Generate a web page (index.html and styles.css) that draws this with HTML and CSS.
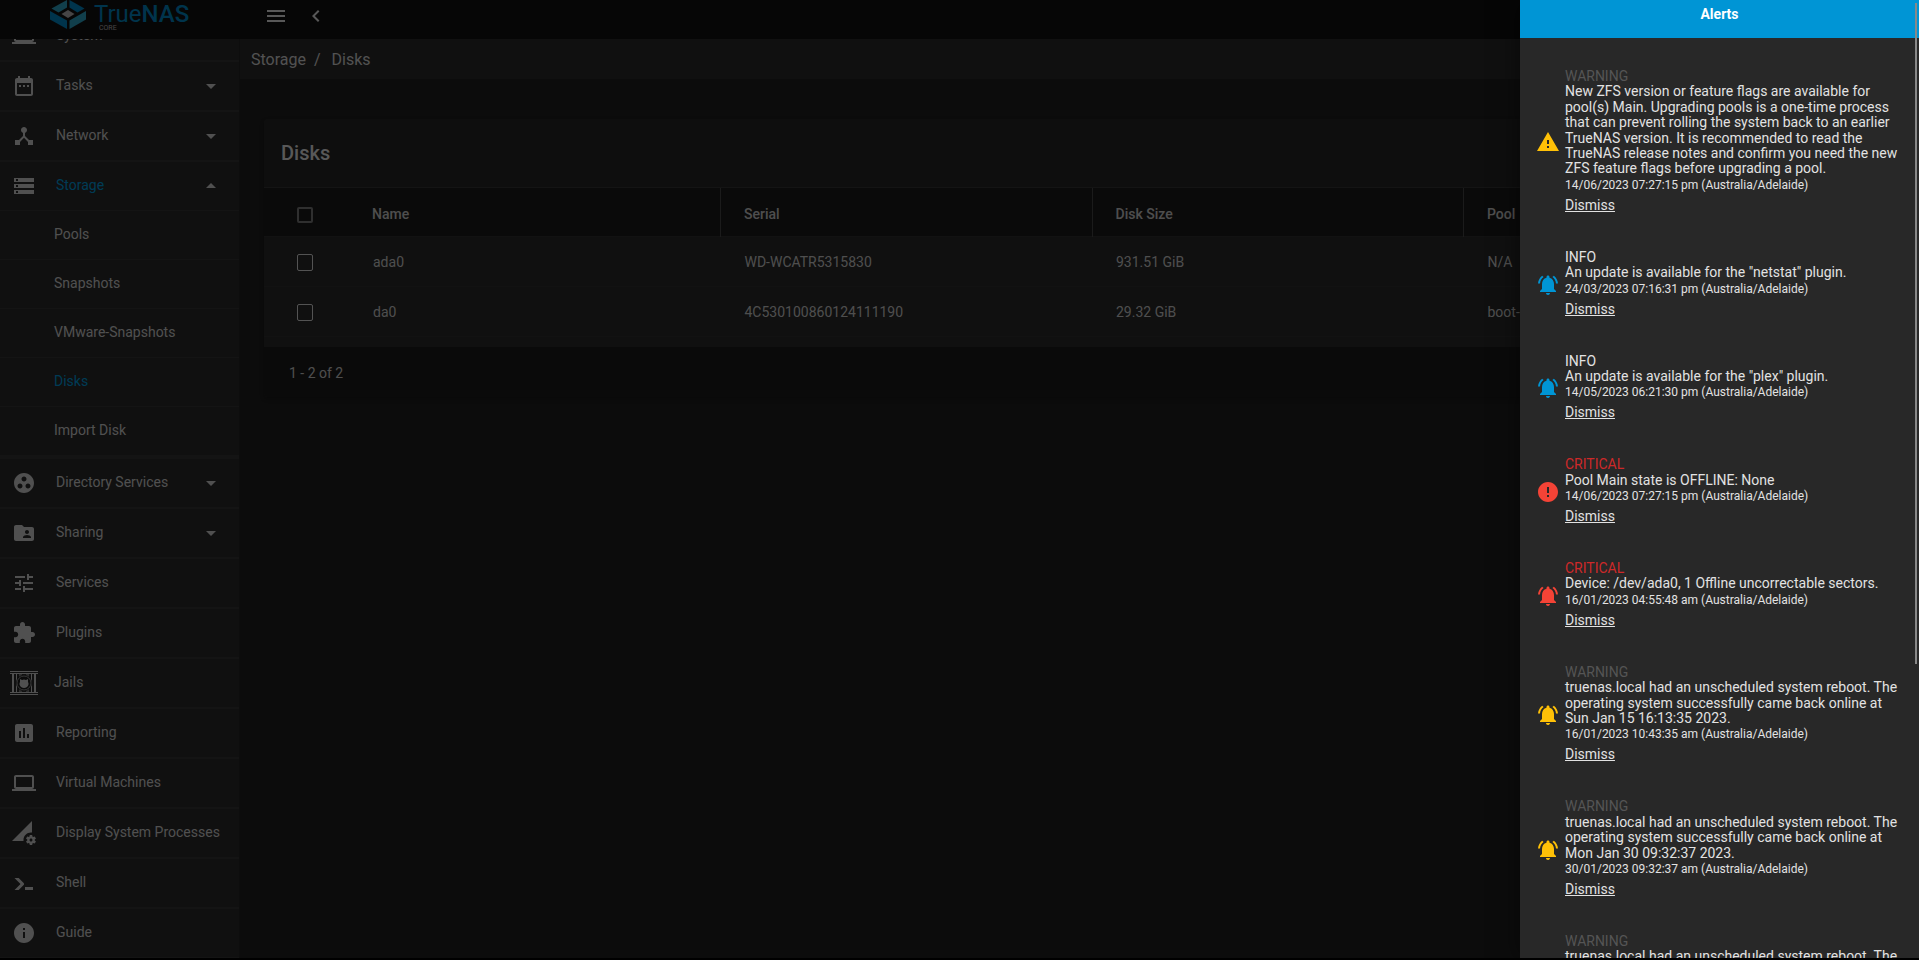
FILE: index.html
```html
<!DOCTYPE html>
<html lang="en">
<head>
<meta charset="utf-8">
<title>TrueNAS - Disks</title>
<link rel="stylesheet" href="styles.css">
</head>
<body>
<div class="app">
  <header class="topbar">
    <a class="logo" href="#" aria-label="TrueNAS Core">
      <svg class="logo-mark" viewBox="0 0 36 29" aria-hidden="true">
        <path fill="#2b9ebf" d="M17 0v7.500L8.500 12.500 1.500 8.500z"/>
        <path fill="#0082bd" d="M19.500 0l15 8.500-7 4-8-5z"/>
        <path fill="#0082bd" d="M0 11l17 9.500V29L0 19.500z"/>
        <path fill="#2b9ebf" d="M36 11l-16.500 9.500V29L36 19.500z"/>
        <path fill="#aeadae" d="M18 10l6.500 4-6.500 4-6.500-4z"/>
      </svg>
      <span class="logo-text"><span class="logo-name">True<b>NAS</b></span><span class="logo-sub">CORE</span></span>
    </a>
    <button class="icon-btn" aria-label="Toggle menu"><svg viewBox="0 0 24 24"><path d="M3 18h18v-2H3v2zm0-5h18v-2H3v2zm0-7v2h18V6H3z"/></svg></button>
    <button class="icon-btn" aria-label="Collapse menu"><svg viewBox="0 0 24 24"><path d="M15.410 7.410L14 6l-6 6 6 6 1.410-1.410L10.830 12z"/></svg></button>
  </header>
  <div class="shell">
    <nav class="sidebar" aria-label="Main">
      <ul class="menu">
        <li><a class="item" href="#"><svg viewBox="0 0 24 24"><path d="M20 18c1.100 0 1.990-.9 1.990-2L22 6c0-1.100-.9-2-2-2H4c-1.100 0-2 .9-2 2v10c0 1.100.9 2 2 2H0v2h24v-2h-4zM4 6h16v10H4V6z"/></svg><span>System</span></a></li>
        <li><a class="item" href="#"><svg viewBox="0 0 24 24"><path d="M9 11H7v2h2v-2zm4 0h-2v2h2v-2zm4 0h-2v2h2v-2zm2-7h-1V2h-2v2H8V2H6v2H5c-1.110 0-1.990.9-1.990 2L3 20c0 1.100.89 2 2 2h14c1.100 0 2-.9 2-2V6c0-1.100-.9-2-2-2zm0 16H5V9h14v11z"/></svg><span>Tasks</span><svg class="caret" viewBox="0 0 24 24"><path d="M7 10l5 5 5-5z"/></svg></a></li>
        <li><a class="item" href="#"><svg viewBox="0 0 24 24"><path d="M17 16l-4-4V8.820C14.160 8.400 15 7.300 15 6c0-1.660-1.340-3-3-3S9 4.340 9 6c0 1.300.84 2.400 2 2.820V12l-4 4H3v5h5v-3.050l4-4.200 4 4.200V21h5v-5h-4z"/></svg><span>Network</span><svg class="caret" viewBox="0 0 24 24"><path d="M7 10l5 5 5-5z"/></svg></a></li>
        <li class="open"><a class="item active" href="#"><svg viewBox="0 0 24 24"><path d="M2 20h20v-4H2v4zm2-3h2v2H4v-2zM2 4v4h20V4H2zm4 3H4V5h2v2zm-4 7h20v-4H2v4zm2-3h2v2H4v-2z"/></svg><span>Storage</span><svg class="caret" viewBox="0 0 24 24"><path d="M7 14l5-5 5 5z"/></svg></a>
          <ul class="submenu">
            <li><a href="#">Pools</a></li>
            <li><a href="#">Snapshots</a></li>
            <li><a href="#">VMware-Snapshots</a></li>
            <li><a class="active" href="#">Disks</a></li>
            <li><a href="#">Import Disk</a></li>
          </ul></li>
        <li><a class="item" href="#"><svg viewBox="0 0 24 24"><path d="M12 2C6.480 2 2 6.480 2 12s4.480 10 10 10 10-4.480 10-10S17.520 2 12 2zM8 17.500c-1.380 0-2.500-1.120-2.500-2.500s1.120-2.500 2.500-2.500 2.500 1.120 2.500 2.500-1.120 2.500-2.500 2.500zM9.500 8c0-1.380 1.120-2.500 2.500-2.500s2.500 1.120 2.500 2.500-1.120 2.500-2.500 2.500S9.500 9.380 9.500 8zm6.500 9.500c-1.380 0-2.500-1.120-2.500-2.500s1.120-2.500 2.500-2.500 2.500 1.120 2.500 2.500-1.120 2.500-2.500 2.500z"/></svg><span>Directory Services</span><svg class="caret" viewBox="0 0 24 24"><path d="M7 10l5 5 5-5z"/></svg></a></li>
        <li><a class="item" href="#"><svg viewBox="0 0 24 24"><path d="M20 6h-8l-2-2H4c-1.100 0-1.990.9-1.990 2L2 18c0 1.100.9 2 2 2h16c1.100 0 2-.9 2-2V8c0-1.100-.9-2-2-2zm-5 3c1.100 0 2 .9 2 2s-.9 2-2 2-2-.9-2-2 .9-2 2-2zm4 8h-8v-1c0-1.330 2.670-2 4-2s4 .67 4 2v1z"/></svg><span>Sharing</span><svg class="caret" viewBox="0 0 24 24"><path d="M7 10l5 5 5-5z"/></svg></a></li>
        <li><a class="item" href="#"><svg viewBox="0 0 24 24"><path d="M3 17v2h6v-2H3zM3 5v2h10V5H3zm10 16v-2h8v-2h-8v-2h-2v6h2zM7 9v2H3v2h4v2h2V9H7zm14 4v-2H11v2h10zm-6-4h2V7h4V5h-4V3h-2v6z"/></svg><span>Services</span></a></li>
        <li><a class="item" href="#"><svg viewBox="0 0 24 24"><path d="M20.500 11H19V7c0-1.100-.9-2-2-2h-4V3.500C13 2.120 11.880 1 10.500 1S8 2.120 8 3.500V5H4c-1.100 0-1.990.9-1.990 2v3.800H3.500c1.490 0 2.700 1.210 2.700 2.700s-1.210 2.700-2.700 2.700H2V20c0 1.100.9 2 2 2h3.800v-1.500c0-1.490 1.210-2.700 2.700-2.700 1.490 0 2.700 1.210 2.700 2.700V22H17c1.100 0 2-.9 2-2v-4h1.500c1.380 0 2.500-1.120 2.500-2.500S21.880 11 20.500 11z"/></svg><span>Plugins</span></a></li>
        <li><a class="item jails" href="#"><svg viewBox="0 0 28 24"><path d="M0 0h28v1H0zM0 2h28v1H0zM0 21h28v1H0zM0 23h28v1H0zM2 3h2v18H2zM6 3h1v18H6zM21 3h1v18h-1zM24 3h2v18h-2z"/><path class="jail-dim" d="M9 3h3v18H9zM16 3h3v18h-3z"/><circle class="jail-gap" cx="14" cy="12" r="8"/><circle class="jail-ring" cx="14" cy="12" r="7"/><path d="M10 8l2 1q2-1 4 0l2-1v3q1.500 2.500-1 5-3 2-6 0-2.500-2.500-1-5z"/></svg><span>Jails</span></a></li>
        <li><a class="item" href="#"><svg viewBox="0 0 24 24"><path d="M19 3H5c-1.100 0-2 .9-2 2v14c0 1.100.9 2 2 2h14c1.100 0 2-.9 2-2V5c0-1.100-.9-2-2-2zM9 17H7v-7h2v7zm4 0h-2V7h2v10zm4 0h-2v-4h2v4z"/></svg><span>Reporting</span></a></li>
        <li><a class="item" href="#"><svg viewBox="0 0 24 24"><path d="M20 18c1.100 0 1.990-.9 1.990-2L22 6c0-1.100-.9-2-2-2H4c-1.100 0-2 .9-2 2v10c0 1.100.9 2 2 2H0v2h24v-2h-4zM4 6h16v10H4V6z"/></svg><span>Virtual Machines</span></a></li>
        <li><a class="item" href="#"><svg viewBox="0 0 24 24"><path d="M18.990 11.500c.34 0 .67.030 1 .070L20 0 0 20h11.560c-.040-.33-.070-.66-.070-1 0-4.140 3.360-7.500 7.500-7.500zm3.710 7.990c.020-.16.040-.32.040-.49 0-.17-.010-.33-.040-.49l1.060-.83c.090-.080.120-.21.060-.32l-1-1.730c-.060-.11-.19-.15-.31-.11l-1.240.5c-.26-.2-.54-.37-.85-.49l-.19-1.320c-.010-.12-.12-.21-.24-.21h-2c-.12 0-.23.090-.25.210l-.19 1.320c-.3.130-.59.290-.85.490l-1.240-.5c-.11-.040-.24 0-.31.110l-1 1.730c-.060.110-.040.240.060.320l1.060.83c-.020.160-.030.320-.030.490 0 .17.010.33.030.49l-1.060.83c-.090.080-.12.210-.060.320l1 1.730c.060.110.19.150.31.110l1.240-.5c.26.2.54.37.85.49l.19 1.320c.020.120.12.210.25.210h2c.12 0 .23-.090.240-.21l.19-1.320c.3-.13.590-.29.840-.49l1.250.5c.11.040.24 0 .31-.11l1-1.730c.060-.11.030-.24-.060-.32l-1.070-.83zm-3.710 1.010c-.83 0-1.500-.67-1.500-1.500s.67-1.500 1.500-1.500 1.500.67 1.500 1.500-.67 1.500-1.500 1.500z"/></svg><span>Display System Processes</span></a></li>
        <li><a class="item" href="#"><svg viewBox="0 0 24 24"><path d="M13 19v-3h8v3h-8zM8.500 13L2.470 7H6.710l4.960 4.950c.58.59.58 1.550 0 2.130L6.730 19H2.500l6-6z"/></svg><span>Shell</span></a></li>
        <li><a class="item" href="#"><svg viewBox="0 0 24 24"><path d="M12 2C6.480 2 2 6.480 2 12s4.480 10 10 10 10-4.480 10-10S17.520 2 12 2zm1 15h-2v-6h2v6zm0-8h-2V7h2v2z"/></svg><span>Guide</span></a></li>
      </ul>
    </nav>
    <main class="content">
      <nav class="crumbs" aria-label="Breadcrumb"><a href="#">Storage</a><span class="sep">/</span><a href="#">Disks</a></nav>
      <section class="card">
        <h1>Disks</h1>
        <table>
          <colgroup><col class="col-check"><col><col><col><col><col class="col-expand"></colgroup>
          <thead><tr><th><input type="checkbox" aria-label="Select all disks"></th><th>Name</th><th>Serial</th><th>Disk Size</th><th>Pool</th><th></th></tr></thead>
          <tbody>
            <tr><td><input type="checkbox" aria-label="Select ada0"></td><td>ada0</td><td>WD-WCATR5315830</td><td>931.51 GiB</td><td>N/A</td><td></td></tr>
            <tr><td><input type="checkbox" aria-label="Select da0"></td><td>da0</td><td>4C530100860124111190</td><td>29.32 GiB</td><td>boot-pool</td><td></td></tr>
          </tbody>
        </table>
        <footer class="pager">1 - 2 of 2</footer>
      </section>
    </main>
  </div>
  <div class="backdrop"></div>
  <aside class="drawer" aria-label="Alerts">
    <h2>Alerts</h2>
    <svg class="defs" aria-hidden="true">
      <symbol id="bell" viewBox="0 0 24 24"><path d="M7.580 4.080L6.150 2.650C3.750 4.480 2.170 7.300 2.030 10.500h2c.15-2.650 1.510-4.970 3.550-6.420zm12.390 6.420h2c-.15-3.200-1.730-6.020-4.120-7.850l-1.420 1.430c2.020 1.450 3.390 3.770 3.540 6.420zM18 11c0-3.070-1.640-5.640-4.500-6.320V4c0-.83-.67-1.500-1.500-1.500s-1.500.67-1.500 1.500v.68C7.630 5.360 6 7.920 6 11v5l-2 2v1h16v-1l-2-2v-5zm-6 11c.14 0 .27-.010.4-.040.650-.14 1.180-.58 1.440-1.180.1-.24.150-.5.150-.78h-4c.010 1.100.9 2 2.010 2z"/></symbol>
      <symbol id="warn" viewBox="0 0 24 24"><path d="M1 21h22L12 2 1 21zm12-3h-2v-2h2v2zm0-4h-2v-4h2v4z"/></symbol>
      <symbol id="error" viewBox="0 0 24 24"><path d="M12 2C6.480 2 2 6.480 2 12s4.480 10 10 10 10-4.480 10-10S17.520 2 12 2zm1 15h-2v-2h2v2zm0-4h-2V7h2v6z"/></symbol>
    </svg>
    <ul class="alerts">
      <li class="alert warning"><svg><use href="#warn"/></svg><div><h3>WARNING</h3><p>New ZFS version or feature flags are available for pool(s) Main. Upgrading pools is a one-time process that can prevent rolling the system back to an earlier TrueNAS version. It is recommended to read the TrueNAS release notes and confirm you need the new ZFS feature flags before upgrading a pool.</p><time>14/06/2023 07:27:15 pm (Australia/Adelaide)</time><a href="#">Dismiss</a></div></li>
      <li class="alert info"><svg><use href="#bell"/></svg><div><h3>INFO</h3><p>An update is available for the "netstat" plugin.</p><time>24/03/2023 07:16:31 pm (Australia/Adelaide)</time><a href="#">Dismiss</a></div></li>
      <li class="alert info"><svg><use href="#bell"/></svg><div><h3>INFO</h3><p>An update is available for the "plex" plugin.</p><time>14/05/2023 06:21:30 pm (Australia/Adelaide)</time><a href="#">Dismiss</a></div></li>
      <li class="alert critical"><svg><use href="#error"/></svg><div><h3>CRITICAL</h3><p>Pool Main state is OFFLINE: None</p><time>14/06/2023 07:27:15 pm (Australia/Adelaide)</time><a href="#">Dismiss</a></div></li>
      <li class="alert critical"><svg><use href="#bell"/></svg><div><h3>CRITICAL</h3><p>Device: /dev/ada0, 1 Offline uncorrectable sectors.</p><time>16/01/2023 04:55:48 am (Australia/Adelaide)</time><a href="#">Dismiss</a></div></li>
      <li class="alert warning"><svg><use href="#bell"/></svg><div><h3>WARNING</h3><p>truenas.local had an unscheduled system reboot. The operating system successfully came back online at Sun Jan 15 16:13:35 2023.</p><time>16/01/2023 10:43:35 am (Australia/Adelaide)</time><a href="#">Dismiss</a></div></li>
      <li class="alert warning"><svg><use href="#bell"/></svg><div><h3>WARNING</h3><p>truenas.local had an unscheduled system reboot. The operating system successfully came back online at Mon Jan 30 09:32:37 2023.</p><time>30/01/2023 09:32:37 am (Australia/Adelaide)</time><a href="#">Dismiss</a></div></li>
      <li class="alert warning last"><div><h3>WARNING</h3><p>truenas.local had an unscheduled system reboot. The</p></div></li>
    </ul>
    <div class="scroll-thumb"></div>
  </aside>
</div>
</body>
</html>
```
FILE: styles.css
```css
* { box-sizing: border-box; }

body {
  margin: 0;
  background: #000;
  color: #fff;
  font: 14px/20px Roboto, sans-serif;
}

a { color: inherit; text-decoration: none; }
ul { list-style: none; margin: 0; padding: 0; }
h1, h2, h3, p { margin: 0; }
svg { display: block; fill: currentColor; flex: none; }

.app {
  position: relative;
  display: flex;
  flex-direction: column;
  height: calc(100vh - 2px);
  overflow: hidden;
  background: #1e1e1e;
}

/* Top bar */
.topbar {
  display: flex;
  align-items: flex-start;
  flex: none;
  height: 39px;
  background: #111;
  color: #ddd;
}
.logo {
  display: flex;
  gap: 8px;
  width: 264px;
  padding-left: 50px;
}
.logo-mark { width: 36px; height: 29px; }
.logo-text { display: flex; flex-direction: column; color: #0082bd; }
.logo-name { font-size: 24px; line-height: 28px; }
.logo-name b { font-weight: 500; }
.logo-sub { margin-top: -4px; padding-left: 5px; font-size: 7px; line-height: 8px; color: #aeadae; }
.icon-btn {
  width: 24px;
  height: 32px;
  margin-right: 16px;
  padding: 4px 0;
  border: 0;
  background: none;
  color: inherit;
}
.icon-btn svg { width: 24px; height: 24px; }

/* Sidebar */
.shell { display: flex; flex: 1; min-height: 0; }
.sidebar {
  flex: none;
  width: 240px;
  overflow: hidden;
  background: #282828;
  border-right: 1px solid #222;
}
.menu { margin-top: -27px; }
.menu > li { border-bottom: 2px solid #323232; }
.menu > li.open { border-bottom-width: 4px; }
.item {
  display: flex;
  align-items: center;
  gap: 20px;
  height: 48px;
  padding: 0 16px 0 12px;
  color: #c8c8c8;
  white-space: nowrap;
}
.item svg { width: 24px; height: 24px; }
.item span { flex: 1; margin-bottom: 2px; }
.item.active span, .submenu .active { color: #0095d5; }
.item.jails { padding-left: 10px; gap: 16px; }
.item.jails svg { width: 28px; }
.jail-dim { fill: #777; }
.jail-gap { fill: #1c1c1c; }
.jail-ring { fill: none; stroke: #888; stroke-width: 1; }
.submenu a {
  display: flex;
  align-items: center;
  height: 49px;
  padding: 0 0 2px 54px;
  border-top: 1px solid #323232;
  color: #c8c8c8;
}

/* Content */
.content { flex: 1; min-width: 0; }
.crumbs {
  display: flex;
  align-items: center;
  height: 40px;
  padding: 2px 0 0 11px;
  background: #282828;
  color: #ccc;
  font-size: 16px;
}
.sep { padding: 0 11px 0 8px; }
.card {
  margin: 40px 24px 0;
  border-radius: 4px;
  overflow: hidden;
  background: #282828;
  box-shadow: 0 2px 4px #0004;
}
.card h1 {
  padding: 22px 17px;
  background: #242424;
  color: #ddd;
  font-size: 20px;
  line-height: 24px;
  font-weight: 500;
}
table { width: 100%; table-layout: fixed; border-collapse: collapse; color: #c4c4c4; }
.col-check { width: 85px; }
.col-expand { width: 60px; }
th { height: 49px; padding: 4px 23px 0; background: #1b1b1b; border-top: 1px solid #323232; font-weight: 500; text-align: left; }
th + th + th { border-left: 1px solid #454545; }
th:last-child { border-left: 0; }
td { height: 50px; padding: 0 24px; border-top: 1px solid #2f2f2f; }
tbody tr:last-child { border-bottom: 1px solid #2f2f2f; }
th:first-child, td:first-child { padding-left: 33px; }
input[type="checkbox"] {
  display: block;
  appearance: none;
  width: 16px;
  height: 17px;
  margin: 2px 0 0;
  border: 1px solid #d0d0d0;
  border-radius: 2px;
}
th input[type="checkbox"] { height: 16px; border: 2px solid #777; }
.pager { margin-top: 10px; padding: 16px 25px 14px; background: #1b1b1b; color: #c4c4c4; }

/* Alerts drawer */
.backdrop { position: absolute; inset: 0; background: rgba(0, 0, 0, 0.6); }
.drawer {
  position: absolute;
  top: 0;
  right: 0;
  bottom: 0;
  width: 399px;
  overflow: hidden;
  background: #282828;
  box-shadow: 0 0 24px #0008;
}
.drawer h2 {
  height: 38px;
  padding: 4px 0 14px;
  background: #0095d5;
  font-size: 14px;
  font-weight: 700;
  line-height: 20px;
  text-align: center;
}
.defs { display: none; }
.alerts { padding-top: 14px; }
.alert {
  display: flex;
  align-items: center;
  gap: 5px;
  padding: 17px 12px 20px 16px;
  line-height: 1.1;
  color: #e2e2e2;
}
.alert svg { width: 24px; height: 24px; margin-top: 3px; }
.alert.last { padding-left: 45px; }
.alert h3 { font-size: 14px; line-height: 1.1; font-weight: 400; }
.alert time { display: block; padding-top: 1px; font-size: 12px; line-height: 15px; }
.alert a { display: block; width: fit-content; margin-top: 4px; text-decoration: underline; line-height: 16px; }
.warning svg { color: #ffc107; }
.warning h3 { color: #555; }
.info svg { color: #0095d5; }
.critical svg { color: #f44336; }
.critical h3 { color: #ce2929; }
.scroll-thumb {
  position: absolute;
  top: 3px;
  right: 2px;
  width: 2px;
  height: 69%;
  background: #888;
}
```
